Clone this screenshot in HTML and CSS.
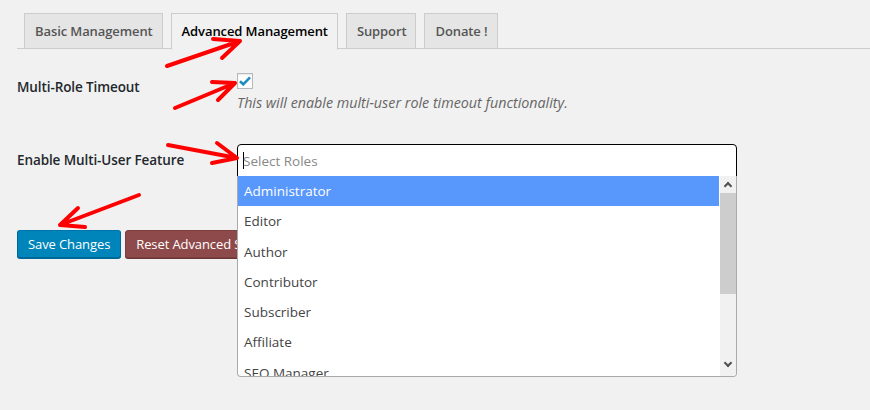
FILE: index.html
```html
<!DOCTYPE html>
<html lang="en">
<head>
	<meta charset="UTF-8">
	<title>Advanced Management</title>
	<link rel="stylesheet" href="styles.css">
</head>
<body>
	<div class="wrap">
		<ul class="tabs">
			<li>Basic Management</li>
			<li class="active">Advanced Management</li>
			<li>Support</li>
			<li>Donate !</li>
		</ul>
		<div class="form">
			<div class="row row-check">
				<div class="label">Multi-Role Timeout</div>
				<div class="field">
					<span class="check">
						<svg width="12" height="10" viewBox="0 0 12 10"><path d="M1 5.2 L4.3 8.3 L11 1.3" fill="none" stroke="#1e8cbe" stroke-width="2.6"/></svg>
					</span>
					<p class="desc">This will enable multi-user role timeout functionality.</p>
				</div>
			</div>
			<div class="row row-select">
				<div class="label">Enable Multi-User Feature</div>
				<div class="field">
					<div class="select">
						<div class="select-box"><span class="caret"></span><span class="ph">Select Roles</span></div>
						<div class="drop">
							<ul class="options">
								<li class="hl">Administrator</li>
								<li>Editor</li>
								<li>Author</li>
								<li>Contributor</li>
								<li>Subscriber</li>
								<li>Affiliate</li>
								<li>SEO Manager</li>
							</ul>
							<div class="scroll">
								<span class="up"></span>
								<span class="thumb"></span>
								<span class="down"></span>
							</div>
						</div>
					</div>
					<p class="desc">This will enable multi-user feature for selected user roles.</p>
				</div>
			</div>
		</div>
		<div class="buttons">
			<button class="btn save">Save Changes</button>
			<button class="btn reset">Reset Advanced Settings</button>
		</div>
	</div>
	<svg class="arrows" width="870" height="410" viewBox="0 0 870 410">
		<g fill="none" stroke="#f00" stroke-width="4" stroke-linecap="round" stroke-linejoin="round">
			<path d="M167 66 L240 41 M213 39 L240 41 L222 58"/>
			<path d="M175 108 L235 83 M212 82 L235 83 L218 100"/>
			<path d="M168 145 L237 158 M217 143 L237 158 L212 163"/>
			<path d="M139 195 L60 225 M78 208 L60 225 L85 227"/>
		</g>
	</svg>
</body>
</html>
```

FILE: styles.css
```css
*{
	margin: 0;
	padding: 0;
	list-style: none;
	box-sizing: border-box;
}
body{
	background: #f1f1f1;
	font-family: "Open Sans", "Noto Sans", sans-serif;
	font-size: 13px;
	color: #23282d;
	width: 870px;
	height: 410px;
	overflow: hidden;
	position: relative;
}
.wrap{
	padding: 13px 0 0 17px;
}
.tabs{
	display: flex;
	border-bottom: 1px solid #ccc;
	padding-left: 7px;
	height: 36px;
}
.tabs li{
	height: 36px;
	padding: 0 9px 0 10px;
	margin-right: 8px;
	border: 1px solid #ccc;
	background: #e5e5e5;
	color: #555;
	font-weight: 600;
	font-size: 13px;
	line-height: 34px;
	letter-spacing: -0.1px;
}
.tabs li.active{
	background: #f1f1f1;
	border-bottom-color: #f1f1f1;
	color: #000;
	height: 37px;
}
.form{
	margin-top: 24px;
}
.row{
	display: grid;
	grid-template-columns: 220px 500px;
}
.label{
	font-weight: 600;
	font-size: 13.5px;
	color: #23282d;
	letter-spacing: -0.1px;
}
.row-check .label{
	padding-top: 5px;
}
.check{
	display: flex;
	align-items: center;
	justify-content: center;
	width: 16px;
	height: 16px;
	background: #fff;
	border: 1px solid #b4b9be;
	box-shadow: inset 0 1px 2px rgba(0,0,0,.1);
}
.desc{
	font-style: italic;
	color: #666;
	font-size: 14.3px;
	margin-top: 4px;
	white-space: nowrap;
}
.row-select{
	margin-top: 32px;
}
.row-select .label{
	padding-top: 7px;
}
.select{
	position: relative;
	width: 500px;
}
.select-box{
	height: 33px;
	background: #fff;
	border: 1px solid #000;
	border-radius: 4px 4px 0 0;
	display: flex;
	align-items: center;
	padding-left: 5px;
	font-size: 13.5px;
}
.caret{
	width: 1px;
	height: 17px;
	background: #000;
}
.ph{
	color: #888;
	margin-left: -1px;
}
.drop{
	position: absolute;
	left: 0;
	top: 32px;
	width: 500px;
	height: 201px;
	background: #fff;
	border: 1px solid #aaa;
	border-top: none;
	border-radius: 0 0 4px 4px;
	overflow: hidden;
	display: flex;
}
.options{
	flex: 1;
}
.options li{
	height: 30.3px;
	line-height: 30px;
	padding-left: 6px;
	font-size: 13.5px;
	color: #444;
}
.options li.hl{
	background: #5897fb;
	color: #fff;
}
.scroll{
	width: 16px;
	background: #f1f1f1;
	position: relative;
	margin-left: 1px;
}
.thumb{
	position: absolute;
	left: 0;
	top: 17px;
	width: 16px;
	height: 101px;
	background: #cdcdcd;
}
.up, .down{
	position: absolute;
	left: 5px;
	width: 6px;
	height: 6px;
	border-left: 2px solid #505050;
	border-top: 2px solid #505050;
	transform: rotate(45deg);
}
.up{
	top: 7px;
}
.down{
	bottom: 10px;
	transform: rotate(225deg);
}
.buttons{
	display: flex;
	gap: 4px;
	margin-top: 30px;
}
.btn{
	height: 28px;
	padding: 0 10px;
	font-family: "Open Sans", "Noto Sans", sans-serif;
	font-size: 13px;
	color: #fff;
	border-radius: 3px;
	border: 1px solid;
	letter-spacing: -0.1px;
}
.save{
	background: #0085ba;
	border-color: #0073aa #006799 #006799;
	box-shadow: 0 1px 0 #006799;
}
.reset{
	background: #8e4a4a;
	border-color: #7c3f3f;
	box-shadow: 0 1px 0 #6b3535;
}
.arrows{
	position: absolute;
	left: 0;
	top: 0;
	pointer-events: none;
}
```
